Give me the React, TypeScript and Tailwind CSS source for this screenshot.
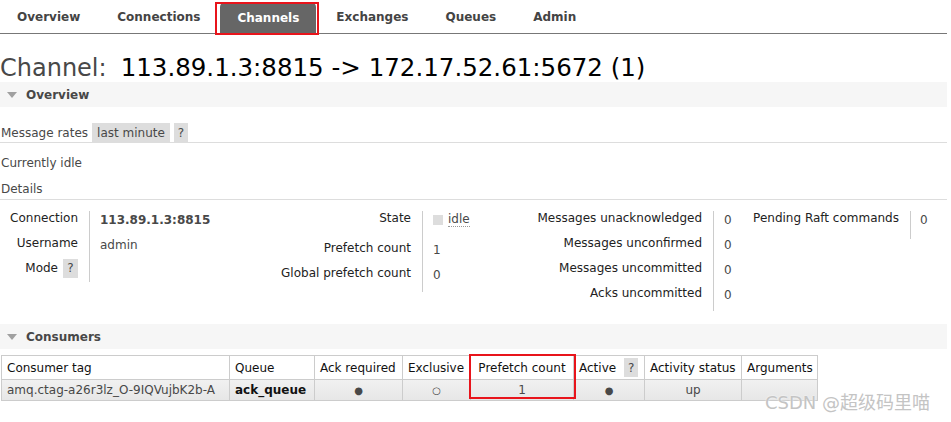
import React from "react";

const Tri = () => (
  <svg width="10" height="6" viewBox="0 0 10 6" className="mr-[9px]">
    <path d="M0 0 L10 0 L5 6 Z" fill="#a0a0a0" />
  </svg>
);

const navItems = ["Overview", "Connections", "Channels", "Exchanges", "Queues", "Admin"];

function Lbl({ children, last, first, extra }: { children: React.ReactNode; last?: boolean; first?: boolean; extra?: string }) {
  return (
    <div className={`text-right pr-[11px] border-r border-[#cccccc] text-[#222] leading-[14px] ${last ? "pb-[8px]" : "pb-[11px]"} ${extra ?? ""}`}>
      {children}
    </div>
  );
}

function Val({ children, last, extra }: { children?: React.ReactNode; last?: boolean; extra?: string }) {
  return (
    <div className={`pl-[10px] pt-[2px] leading-[14px] text-[#484848] ${last ? "pb-[6px]" : "pb-[9px]"} ${extra ?? ""}`}>
      {children}
    </div>
  );
}

export default function App() {
  return (
    <div className="relative w-[951px] h-[422px] overflow-hidden bg-white font-['DejaVu_Sans',Verdana,sans-serif] text-[12px] text-[#484848]">
      <div className="w-[947px]">
        {/* nav */}
        <div className="relative flex items-end gap-[3px] h-[34px] border-b border-[#777]">
          {navItems.map((n) =>
            n === "Channels" ? (
              <div key={n} className="h-[31px] px-[17px] flex items-center bg-[#666] rounded-t-[5px] text-white font-bold">
                {n}
              </div>
            ) : (
              <div key={n} className="h-[33px] px-[17px] flex items-center font-bold text-[#444]">
                {n}
              </div>
            )
          )}
          <div className="absolute left-[215px] top-[2px] w-[104px] h-[33px] border-2 border-[#e8141b]" />
        </div>

        {/* heading */}
        <div className="mt-[20px] h-[28px] leading-[28px] whitespace-nowrap">
          <span className="text-[24px] text-[#484848]">Channel:</span>
          <span className="text-[24.5px] text-black ml-[14px]">113.89.1.3:8815 -&gt; 172.17.52.61:5672 (1)</span>
        </div>

        {/* Overview bar */}
        <div className="h-[25px] bg-[#f6f6f6] flex items-center pl-[7px] font-bold">
          <Tri />
          <span>Overview</span>
        </div>

        {/* message rates */}
        <div className="mt-[16px] h-[20px] flex items-center border-b border-[#dddddd] pl-[1px]">
          <span className="mr-[4px]">Message rates</span>
          <span className="h-[19px] flex items-center bg-[#dddddd] px-[5px] mr-[4px]">last minute</span>
          <span className="h-[19px] flex items-center bg-[#dddddd] px-[4px]">?</span>
        </div>

        <div className="mt-[13px] leading-[14px] pl-[1px]">Currently idle</div>
        <div className="mt-[12px] leading-[14px] pl-[1px] pb-[3px] border-b border-[#dddddd]">Details</div>

        {/* details tables */}
        <div className="mt-[11px] flex items-start">
          <div className="grid grid-cols-[90px_140px]">
            <Lbl>Connection</Lbl>
            <Val extra="font-bold text-[#333]">113.89.1.3:8815</Val>
            <Lbl>Username</Lbl>
            <Val>admin</Val>
            <Lbl last extra="!pb-[7px]">
              <span className="inline-flex items-center">
                Mode
                <span className="ml-[5px] inline-flex items-center justify-center h-[19px] w-[15px] bg-[#dddddd] text-[#484848] -my-[3px]">?</span>
              </span>
            </Lbl>
            <Val last />
          </div>

          <div className="grid grid-cols-[193px_90px]">
            <Lbl extra="!pb-[15px]">State</Lbl>
            <Val extra="!pb-[13px]">
              <span className="inline-flex items-center">
                <span className="w-[10px] h-[10px] bg-[#dddddd] mr-[5px]" />
                <span className="border-b border-dotted border-[#999] leading-[13px]">idle</span>
              </span>
            </Val>
            <Lbl>Prefetch count</Lbl>
            <Val>1</Val>
            <Lbl last extra="!pb-[12px]">Global prefetch count</Lbl>
            <Val last extra="!pb-[10px]">0</Val>
          </div>

          <div className="grid grid-cols-[201px_30px]">
            <Lbl>Messages unacknowledged</Lbl>
            <Val>0</Val>
            <Lbl>Messages unconfirmed</Lbl>
            <Val>0</Val>
            <Lbl>Messages uncommitted</Lbl>
            <Val>0</Val>
            <Lbl extra="!pb-[11px]">Acks uncommitted</Lbl>
            <Val extra="!pb-[9px]">0</Val>
          </div>

          <div className="grid grid-cols-[167px_30px]">
            <Lbl extra="!pb-[14px]">Pending Raft commands</Lbl>
            <Val extra="!pb-[12px] !pl-[9px]">0</Val>
          </div>
        </div>

        {/* Consumers bar */}
        <div className="mt-[13px] h-[25px] bg-[#f6f6f6] flex items-center pl-[7px] font-bold">
          <Tri />
          <span>Consumers</span>
        </div>

        {/* consumers table */}
        <div className="relative mt-[6px] ml-[1px]">
          <table className="border-collapse table-fixed w-[816px]">
            <colgroup>
              <col className="w-[228px]" />
              <col className="w-[85px]" />
              <col className="w-[88px]" />
              <col className="w-[68px]" />
              <col className="w-[103px]" />
              <col className="w-[71px]" />
              <col className="w-[97px]" />
              <col className="w-[76px]" />
            </colgroup>
            <thead>
              <tr className="h-[24px] bg-white text-[#111]">
                <th className="border border-[#cccccc] font-normal text-left pl-[5px] p-0">Consumer tag</th>
                <th className="border border-[#cccccc] font-normal text-left pl-[5px] p-0">Queue</th>
                <th className="border border-[#cccccc] font-normal text-left pl-[5px] p-0 whitespace-nowrap">Ack required</th>
                <th className="border border-[#cccccc] font-normal text-left pl-[5px] p-0">Exclusive</th>
                <th className="border border-[#cccccc] font-normal text-center p-0 whitespace-nowrap">Prefetch count</th>
                <th className="border border-[#cccccc] font-normal text-left pl-[5px] p-0">
                  <span className="inline-flex items-center">
                    Active
                    <span className="ml-[8px] inline-flex items-center justify-center h-[19px] w-[14px] bg-[#dddddd] text-[#484848]">?</span>
                  </span>
                </th>
                <th className="border border-[#cccccc] font-normal text-left pl-[5px] p-0 whitespace-nowrap">Activity status</th>
                <th className="border border-[#cccccc] font-normal text-left pl-[5px] p-0">Arguments</th>
              </tr>
            </thead>
            <tbody>
              <tr className="h-[21px] bg-gradient-to-b from-[#f1f1f1] to-[#e6e6e6] text-[#484848]">
                <td className="border border-[#cccccc] pl-[5px] p-0 whitespace-nowrap">amq.ctag-a26r3lz_O-9IQVujbK2b-A</td>
                <td className="border border-[#cccccc] pl-[5px] p-0 font-bold text-[#111]">ack_queue</td>
                <td className="border border-[#cccccc] p-0 text-center text-[10px]">●</td>
                <td className="border border-[#cccccc] p-0 text-center text-[10px]">○</td>
                <td className="border border-[#cccccc] p-0 text-center">1</td>
                <td className="border border-[#cccccc] p-0 text-center text-[10px]">●</td>
                <td className="border border-[#cccccc] p-0 text-center">up</td>
                <td className="border border-[#cccccc] p-0"></td>
              </tr>
            </tbody>
          </table>
          <div className="absolute left-[468px] top-[-1px] w-[107px] h-[45px] border-2 border-[#e8141b]" />
        </div>
      </div>

      {/* watermark */}
      <div className="absolute left-[765px] top-[391px] text-[18px] leading-[24px] text-[#c4c4c4] font-['DejaVu_Sans','Noto_Sans_CJK_SC',sans-serif] whitespace-nowrap [text-shadow:0_0_2px_#fff]">
        CSDN @超级码里喵
      </div>
    </div>
  );
}
